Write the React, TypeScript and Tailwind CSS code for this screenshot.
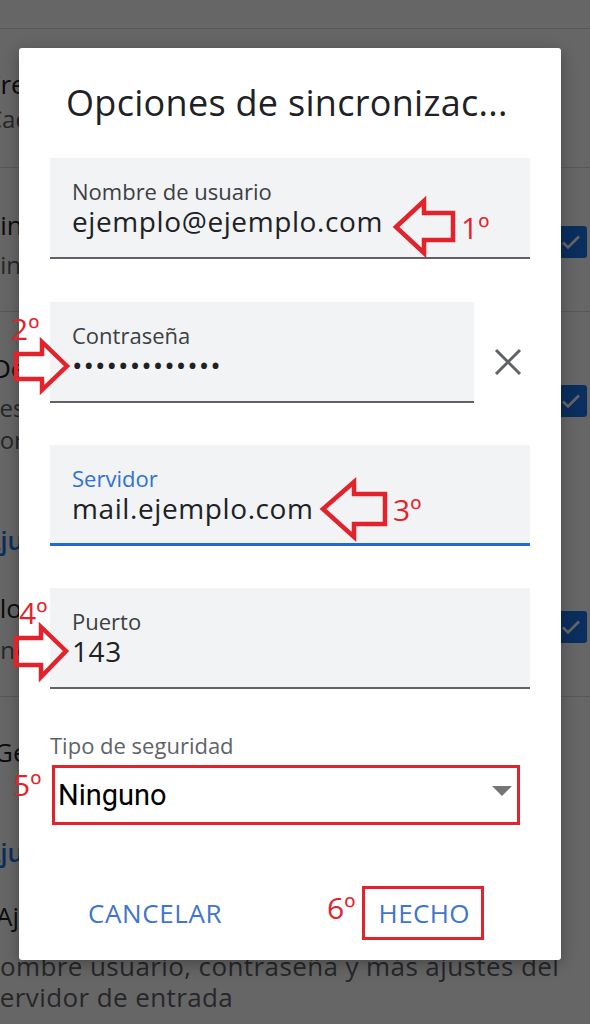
import React from "react";

const RED = "#e3232c";

function Check() {
  return (
    <div className="w-[32px] h-[32px] rounded-[3px] bg-[#1a73e8] flex items-center justify-center">
      <svg width="24" height="24" viewBox="0 0 24 24">
        <path d="M4 12.5l5 5L20 6.5" fill="none" stroke="#ffffff" strokeWidth="2.6" />
      </svg>
    </div>
  );
}

function Background() {
  return (
    <div className="flex flex-col text-[#202124] whitespace-nowrap">
      <div className="h-[29px] border-b border-[#dadce0]" />
      <div className="h-[139px] border-b border-[#dadce0] pt-[40px]">
        <div className="text-[26px] leading-[30px] ml-[-13px]">Frecuencia de sincronización</div>
        <div className="text-[24px] leading-[30px] mt-[5px] ml-[-13px] text-[#5f6368]">Cada 15 minutos</div>
      </div>
      <div className="h-[144px] border-b border-[#dadce0] pt-[42px] flex items-start justify-between">
        <div>
          <div className="text-[26px] leading-[30px] ml-[-14px]">Sincronizar correo</div>
          <div className="text-[24px] leading-[30px] mt-[10px] ml-[-13px] text-[#5f6368]">Sincronizar el correo de esta cuenta</div>
        </div>
        <div className="mt-[16px] mr-[3px]">
          <Check />
        </div>
      </div>
      <div className="h-[210px] pt-[41px] flex items-start justify-between">
        <div>
          <div className="text-[26px] leading-[30px] ml-[-8px]">Descargar archivos adjuntos</div>
          <div className="text-[24px] leading-[30px] mt-[10px] ml-[-18px] text-[#5f6368]">Descargar automáticamente los archivos adjuntos</div>
          <div className="text-[24px] leading-[30px] mt-[2px] ml-[-15px] text-[#5f6368]">por Wi-Fi</div>
        </div>
        <div className="mt-[32px] mr-[3px]">
          <Check />
        </div>
      </div>
      <div className="h-[58px] pt-[3px]">
        <div className="text-[25px] leading-[30px] ml-[-16px] font-semibold text-[#1a73e8]">Ajustes del servidor</div>
      </div>
      <div className="h-[117px] border-b border-[#dadce0] pt-[13px] flex items-start justify-between">
        <div>
          <div className="text-[26px] leading-[30px] ml-[-17px]">Bloquear imágenes externas</div>
          <div className="text-[24px] leading-[30px] mt-[12px] ml-[-13px] text-[#5f6368]">Enviar imágenes solo con permiso</div>
        </div>
        <div className="mt-[18px] mr-[3px]">
          <Check />
        </div>
      </div>
      <div className="h-[103px] pt-[40px]">
        <div className="text-[26px] leading-[30px] ml-[-6px]">Gestionar etiquetas</div>
      </div>
      <div className="h-[80px] pt-[37px]">
        <div className="text-[25px] leading-[30px] ml-[-16px] font-semibold text-[#1a73e8]">Ajustes del servidor</div>
      </div>
      <div className="pt-[21px]">
        <div className="text-[26px] leading-[30px] ml-[-4px]">Ajustes del servidor de entrada</div>
        <div className="text-[26px] leading-[31px] mt-[20px] ml-[-20px] tracking-[0.4px] text-[#5f6368]">Nombre usuario, contraseña y más ajustes del</div>
        <div className="text-[26px] leading-[31px] ml-[-13px] tracking-[0.4px] text-[#5f6368]">servidor de entrada</div>
      </div>
    </div>
  );
}

function Field({
  label,
  value,
  focused,
  width,
  dots,
}: {
  label: string;
  value: string;
  focused?: boolean;
  width?: string;
  dots?: boolean;
}) {
  return (
    <div
      className={
        "h-[101px] bg-[#f1f3f4] pl-[22px] pt-[21px] flex flex-col " +
        (focused ? "border-b-[3px] border-[#1f6bd6] " : "border-b-2 border-[#5f6368] ") +
        (width ?? "")
      }
    >
      <div className={"text-[22px] leading-[24px] " + (focused ? "text-[#2f72d4]" : "text-[#3c4043]")}>{label}</div>
      <div
        className={
          "mt-[2px] leading-[32px] text-[#202124] whitespace-nowrap " +
          (dots ? "text-[28px] tracking-[1px]" : "text-[28px] tracking-[0.6px]")
        }
      >
        {value}
      </div>
    </div>
  );
}

function Dialog() {
  return (
    <div className="absolute left-[19px] top-[48px] w-[542px] bg-white rounded-[3px] shadow-[0_4px_16px_rgba(0,0,0,0.3)] flex flex-col pt-[34px] pb-[20px]">
      <div className="pl-[47px] text-[36px] leading-[42px] tracking-[0.3px] text-[#202124] whitespace-nowrap">Opciones de sincronizac...</div>
      <div className="px-[31px] mt-[34px] flex flex-col">
        <Field label="Nombre de usuario" value="ejemplo@ejemplo.com" />
        <div className="mt-[43px] flex items-start">
          <Field label="Contraseña" value="•••••••••••••" width="w-[424px]" dots />
          <div className="ml-[20px] mt-[46px] w-[28px] h-[28px]">
            <svg width="28" height="28" viewBox="0 0 28 28">
              <path d="M2 2L26 26M26 2L2 26" stroke="#5f6368" strokeWidth="3" fill="none" />
            </svg>
          </div>
        </div>
        <div className="mt-[42px]">
          <Field label="Servidor" value="mail.ejemplo.com" focused />
        </div>
        <div className="mt-[42px]">
          <Field label="Puerto" value="143" />
        </div>
        <div className="mt-[44px] text-[22px] leading-[24px] text-[#5f6368]">Tipo de seguridad</div>
        <div className="mt-[8px] ml-[2px] w-[468px] h-[60px] border-[3px] border-[#e3232c] flex items-center justify-between pl-[3px] pr-[5px]">
          <span className="font-['Roboto',sans-serif] text-[29px] leading-[34px] text-black">Ninguno</span>
          <svg width="20" height="10" viewBox="0 0 20 10" className="mb-[8px]">
            <path d="M0 0H20L10 10Z" fill="#757575" />
          </svg>
        </div>
      </div>
      <div className="mt-[61px] h-[54px] flex items-center justify-between pl-[69px] pr-[77px]">
        <span className="text-[26px] leading-[30px] tracking-[0.6px] text-[#3f74d0]">CANCELAR</span>
        <span className="h-[54px] border-[3px] border-[#e3232c] pl-[14px] pr-[11px] flex items-center text-[26px] leading-[30px] tracking-[0.4px] text-[#3f74d0]">
          HECHO
        </span>
      </div>
    </div>
  );
}

function Num({ text, x, y }: { text: string; x: string; y: string }) {
  return (
    <div className={"absolute text-[30px] leading-[30px] text-[#e3232c] whitespace-nowrap " + x + " " + y}>{text}</div>
  );
}

export default function App() {
  return (
    <div className="relative w-[590px] h-[1024px] overflow-hidden bg-white font-['Open_Sans',sans-serif]">
      <Background />
      <div className="absolute inset-0 bg-black/60" />
      <Dialog />
      <svg className="absolute inset-0 pointer-events-none" width="590" height="1024" viewBox="0 0 590 1024">
        <g fill="none" stroke={RED} strokeWidth="4.5" strokeLinejoin="miter">
          <path d="M396 227 L424 201 L424 213 L453 213 L453 240 L424 240 L424 253 Z" />
          <path d="M67 366 L42 342 L42 354 L16 354 L16 379 L42 379 L42 390 Z" />
          <path d="M323 509 L354 482 L354 494 L385 494 L385 524 L354 524 L354 537 Z" />
          <path d="M66 651 L41 627 L41 638 L16 638 L16 665 L41 665 L41 677 Z" />
        </g>
      </svg>
      <Num text="1º" x="left-[461px]" y="top-[213px]" />
      <Num text="2º" x="left-[11px]" y="top-[314px]" />
      <Num text="3º" x="left-[393px]" y="top-[495px]" />
      <Num text="4º" x="left-[19px]" y="top-[598px]" />
      <Num text="5º" x="left-[13px]" y="top-[770px]" />
      <Num text="6º" x="left-[327px]" y="top-[893px]" />
    </div>
  );
}
